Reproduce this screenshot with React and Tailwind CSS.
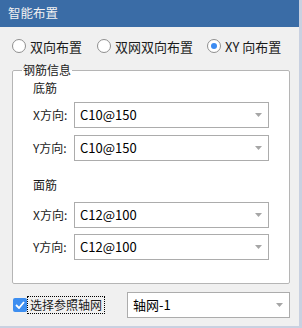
import React from "react";

const font = { fontFamily: '"Noto Sans CJK SC", "Microsoft YaHei", sans-serif' };

const Arrow = () => (
  <svg width="7" height="4" viewBox="0 0 7 4" className="shrink-0">
    <path d="M0 0h7L3.5 4z" fill="#a6a6a6" />
  </svg>
);

const Combo = ({ value, className = "" }) => (
  <div
    className={`flex h-[26px] shrink-0 items-center justify-between border border-[#acacac] bg-white pl-[5px] pr-[6px] text-[13px] text-black ${className}`}
  >
    <span>{value}</span>
    <Arrow />
  </div>
);

const Radio = ({ checked, label }) => (
  <label className="flex shrink-0 items-center gap-[4px]">
    <span className="flex h-[14px] w-[14px] items-center justify-center rounded-full border border-[#8f8f8f] bg-white">
      {checked && <span className="h-[6px] w-[6px] rounded-full bg-[#3b8bf2]" />}
    </span>
    <span className="whitespace-nowrap">{label}</span>
  </label>
);

const Row = ({ label, value }) => (
  <div className="flex items-center">
    <span className="w-[41px]">{label}</span>
    <Combo value={value} className="w-[195px]" />
  </div>
);

export default function App() {
  return (
    <div
      className="flex h-[328px] w-[302px] flex-col border-r-[3px] border-b-[2px] border-[#c9d1e1] bg-[#f0f0f0] text-[12px] text-[#1a1a1a]"
      style={font}
    >
      <div className="flex h-[27px] shrink-0 items-center bg-[#3a6ca6] pl-[8px] text-[12.5px] text-[#f2f2f2]">
        智能布置
      </div>

      <div className="mt-[12px] flex h-[14px] items-center pl-[12px] text-[13px] leading-none">
        <Radio label="双向布置" />
        <div className="w-[15px] shrink-0" />
        <Radio label="双网双向布置" />
        <div className="w-[14px] shrink-0" />
        <Radio checked label="XY 向布置" />
      </div>

      <fieldset className="mx-[12px] mt-[9px] h-[222px] w-[278px] rounded-[2px] border border-[#b5b5b5] bg-white pl-[20px]">
        <legend className="-ml-[11px] px-[1px] leading-[16px]">钢筋信息</legend>
        <div className="mt-[2px] leading-[16px]">底筋</div>
        <div className="mt-[6px] flex flex-col gap-[7px]">
          <Row label="X方向:" value="C10@150" />
          <Row label="Y方向:" value="C10@150" />
        </div>
        <div className="mt-[16px] leading-[16px]">面筋</div>
        <div className="mt-[9px] flex flex-col gap-[6px]">
          <Row label="X方向:" value="C12@100" />
          <Row label="Y方向:" value="C12@100" />
        </div>
      </fieldset>

      <div className="mt-[8px] flex items-center pl-[13px]">
        <span className="flex h-[14px] w-[14px] shrink-0 items-center justify-center rounded-[2px] bg-[#3d8ef0]">
          <svg width="10" height="8" viewBox="0 0 10 8">
            <path d="M1 4l3 3 5-6" fill="none" stroke="#fff" strokeWidth="1.8" />
          </svg>
        </span>
        <span className="w-[78px] shrink-0 whitespace-nowrap border border-dotted border-black px-[2px] leading-[16px]">
          选择参照轴网
        </span>
        <Combo value="轴网-1" className="ml-[22px] w-[163px]" />
      </div>
    </div>
  );
}
